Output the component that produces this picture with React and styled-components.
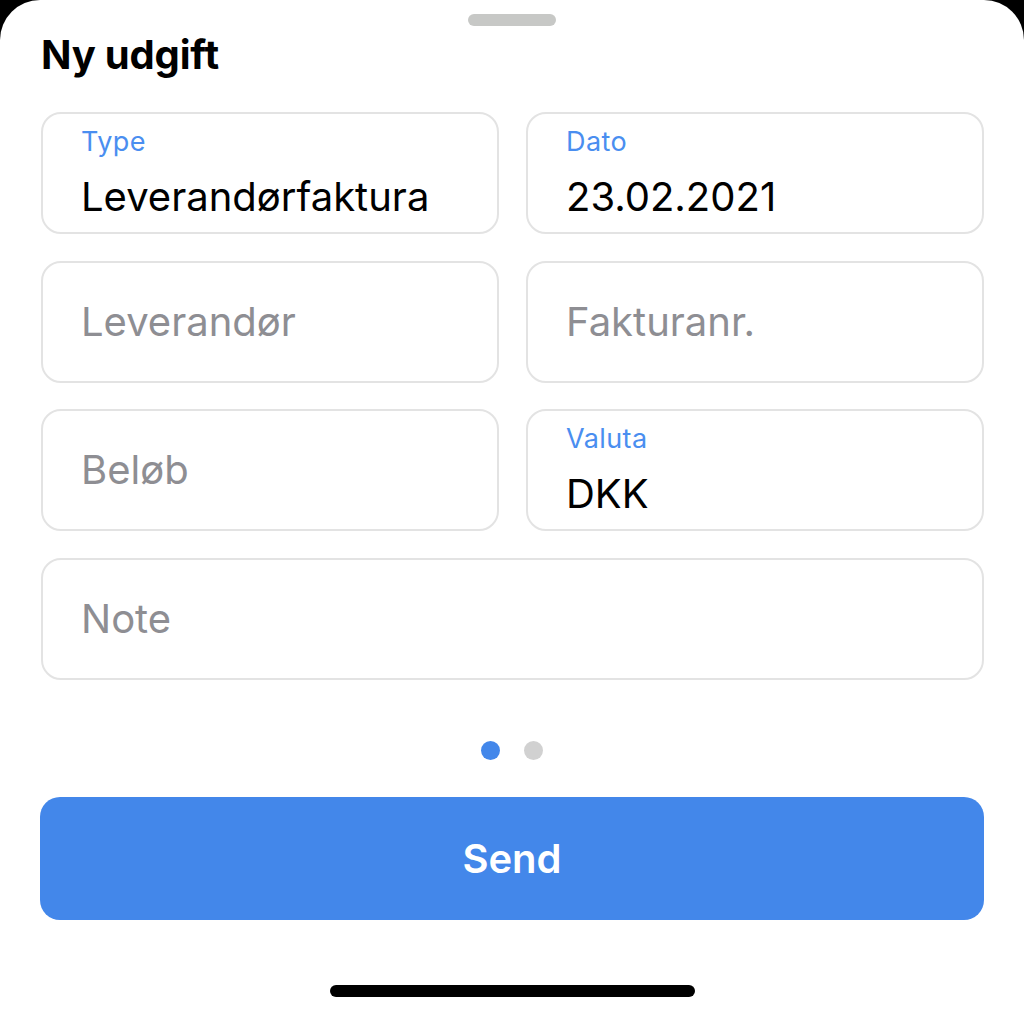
import React from 'react';
import styled, { createGlobalStyle } from 'styled-components';

const GlobalStyle = createGlobalStyle`
  html, body {
    margin: 0;
    padding: 0;
    background: #000;
  }
  body {
    font-family: Inter, "Noto Sans", "Liberation Sans", sans-serif;
    -webkit-font-smoothing: antialiased;
  }
`;

const Sheet = styled.div`
  min-height: 100vh;
  box-sizing: border-box;
  background: #fff;
  border-radius: 40px 40px 0 0;
  padding: 14px 40px 20px 40px;
  display: flex;
  flex-direction: column;
`;

const Handle = styled.div`
  align-self: center;
  width: 88px;
  height: 12px;
  border-radius: 6px;
  background: #c7c8c6;
`;

const Title = styled.h1`
  margin: 5px 0 0 1px;
  font-size: 40px;
  line-height: 48px;
  font-weight: 700;
  color: #000;
  letter-spacing: -0.2px;
`;

const FieldGrid = styled.div`
  margin-top: 33px;
  display: grid;
  grid-template-columns: 1fr 1fr;
  column-gap: 27px;
  row-gap: 26.7px;
  padding: 0 0 0 1px;
`;

const Field = styled.div`
  grid-column: ${props => (props.wide ? '1 / span 2' : 'auto')};
  height: 122px;
  box-sizing: border-box;
  border: 2px solid #e3e3e3;
  border-radius: 20px;
  padding: 0 38px;
  display: flex;
  flex-direction: column;
  justify-content: center;
`;

const Label = styled.div`
  margin-top: 1px;
  font-size: 27px;
  line-height: 32px;
  letter-spacing: 0.4px;
  color: #4a8ef0;
`;

const Value = styled.div`
  font-size: 40px;
  line-height: 48px;
  color: ${props => (props.placeholder ? '#8e8e93' : '#000')};
  margin-top: ${props => (props.placeholder ? '0' : '15px')};
`;

const Dots = styled.div`
  margin-top: 61px;
  display: flex;
  justify-content: center;
  gap: 24px;
`;

const Dot = styled.span`
  width: 19px;
  height: 19px;
  border-radius: 50%;
  background: ${props => (props.active ? '#4387ea' : '#d1d1d1')};
`;

const SendButton = styled.button`
  margin-top: 37px;
  height: 123px;
  border: none;
  border-radius: 20px;
  background: #4387ea;
  color: #fff;
  font-family: inherit;
  font-size: 40px;
  font-weight: 600;
  cursor: pointer;
`;

const HomeIndicator = styled.div`
  align-self: center;
  margin-top: 65px;
  width: 365px;
  height: 12px;
  border-radius: 6px;
  background: #000;
`;

const fields = [
  { label: 'Type', value: 'Leverandørfaktura' },
  { label: 'Dato', value: '23.02.2021' },
  { placeholder: 'Leverandør' },
  { placeholder: 'Fakturanr.' },
  { placeholder: 'Beløb' },
  { label: 'Valuta', value: 'DKK' },
  { placeholder: 'Note', wide: true },
];

const App = () => (
  <>
    <GlobalStyle />
    <Sheet>
      <Handle />
      <Title>Ny udgift</Title>
      <FieldGrid>
        {fields.map(f => (
          <Field key={f.label || f.placeholder} wide={f.wide}>
            {f.label ? (
              <>
                <Label>{f.label}</Label>
                <Value>{f.value}</Value>
              </>
            ) : (
              <Value placeholder>{f.placeholder}</Value>
            )}
          </Field>
        ))}
      </FieldGrid>
      <Dots>
        <Dot active />
        <Dot />
      </Dots>
      <SendButton>Send</SendButton>
      <HomeIndicator />
    </Sheet>
  </>
);

export default App;
